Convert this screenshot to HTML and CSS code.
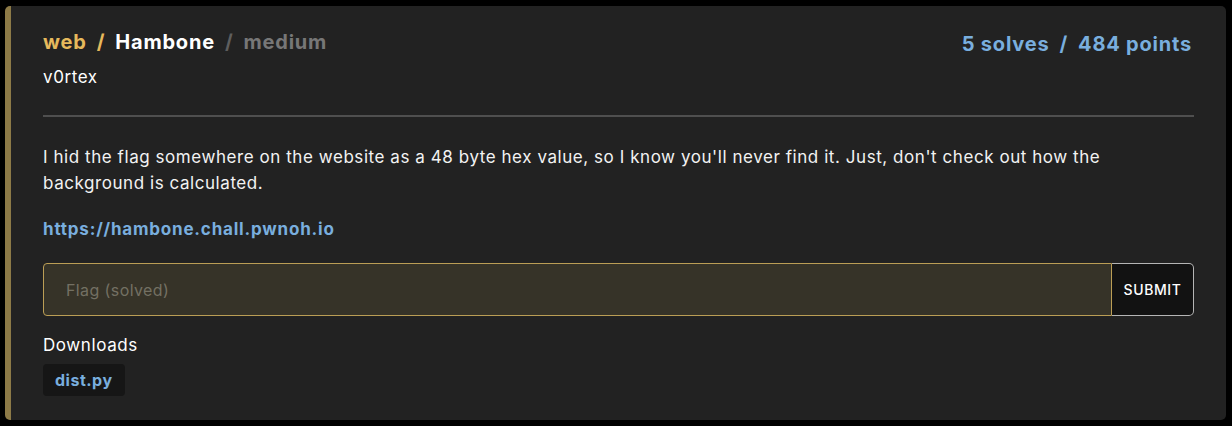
FILE: index.html
```html
<!DOCTYPE html>
<html>
<head>
<meta charset="utf-8">
<link rel="stylesheet" href="styles.css">
</head>
<body>
<div class="card">
  <div class="head">
    <div class="title">
      <span class="cat">web</span><span class="sep gold">/</span><span class="name">Hambone</span><span class="sep gray">/</span><span class="diff">medium</span>
    </div>
    <div class="score">5 solves<span class="sep">/</span>484 points</div>
  </div>
  <div class="author">v0rtex</div>
  <hr class="divider">
  <p class="desc">I hid the flag somewhere on the website as a 48 byte hex value, so I know you'll never find it. Just, don't check out how the background is calculated.</p>
  <a class="link" href="#">https://hambone.chall.pwnoh.io</a>
  <form class="flag-form">
    <input class="flag-input" type="text" placeholder="Flag (solved)">
    <button class="submit" type="button">SUBMIT</button>
  </form>
  <div class="downloads">Downloads</div>
  <a class="chip" href="#">dist.py</a>
</div>
</body>
</html>
```

FILE: styles.css
```css
html, body {
  margin: 0;
  padding: 0;
  background: #000;
}
body {
  padding: 6px 6px 6px 5px;
  font-family: Inter, "Noto Sans", sans-serif;
  color: #fff;
}
.card {
  background: #222;
  border-left: 6px solid #8d7a47;
  border-radius: 5px;
  padding: 22px 32px 24px 32px;
  height: 414px;
  box-sizing: border-box;
  display: flex;
  flex-direction: column;
  align-items: flex-start;
  letter-spacing: 0.6px;
}
.head {
  display: flex;
  justify-content: space-between;
  align-items: center;
  width: 100%;
  font-size: 20px;
  font-weight: 700;
  line-height: 24px;
  letter-spacing: 0.8px;
}
.cat { color: #e6b95c; }
.name { color: #fff; }
.diff { color: #777; }
.sep { margin: 0 10px; }
.sep.gold { color: #e6b95c; }
.sep.gray { color: #5e5e5e; }
.score { color: #79aede; margin-top: 4px; margin-right: 2px; letter-spacing: 0.8px; }
.author {
  margin-top: 9px;
  font-size: 17px;
  line-height: 24px;
}
.divider {
  width: 100%;
  margin: 26px 0 0 0;
  border: none;
  height: 2px;
  background: #4f4f4f;
}
.desc {
  margin: 27px 0 0 0;
  font-size: 17px;
  line-height: 26px;
  color: #f2f2f2;
  letter-spacing: 0.56px;
}
.link {
  margin-top: 20px;
  font-size: 17px;
  line-height: 26px;
  font-weight: 700;
  letter-spacing: 0.8px;
  color: #79aede;
  text-decoration: none;
}
.flag-form {
  margin-top: 21px;
  display: flex;
  width: 100%;
  height: 53px;
}
.flag-input {
  flex: 1;
  box-sizing: border-box;
  height: 53px;
  background: #363328;
  border: 1px solid #bb9e55;
  border-radius: 4px 0 0 4px;
  padding: 0 22px;
  font-family: Inter, "Noto Sans", sans-serif;
  font-size: 16px;
  letter-spacing: 0.4px;
  color: #fff;
  outline: none;
}
.flag-input::placeholder { color: #737063; }
.submit {
  width: 82px;
  height: 53px;
  box-sizing: border-box;
  background: #121212;
  border: 1px solid #b5b5b5;
  border-left: none;
  border-radius: 0 5px 5px 0;
  color: #fff;
  font-family: Inter, "Noto Sans", sans-serif;
  font-size: 14px;
  font-weight: 500;
  letter-spacing: 0.6px;
  padding: 0;
}
.downloads {
  margin-top: 17px;
  font-size: 17px;
  line-height: 24px;
}
.chip {
  margin-top: 7px;
  display: inline-flex;
  align-items: center;
  height: 32px;
  padding: 0 12px;
  background: #161616;
  border-radius: 4px;
  color: #79aede;
  font-weight: 700;
  font-size: 16px;
  letter-spacing: 0.5px;
  text-decoration: none;
}
```
